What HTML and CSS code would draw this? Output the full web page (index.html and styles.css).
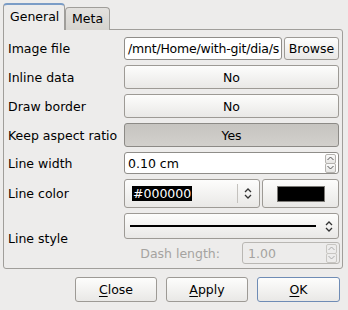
FILE: index.html
```html
<!DOCTYPE html>
<html lang="en">
<head>
    <meta charset="UTF-8">
    <title>Image properties</title>
    <link rel="stylesheet" href="styles.css">
</head>
<body>

<div class="dialog">
    <div class="tabs">
        <div class="tab active">General</div>
        <div class="tab">Meta</div>
    </div>

    <div class="panel">
        <div class="label">Image file</div>
        <div class="field split">
            <div class="entry file">/mnt/Home/with-git/dia/s</div>
            <button class="btn browse">Browse</button>
        </div>

        <div class="label">Inline data</div>
        <div class="field"><button class="btn toggle">No</button></div>

        <div class="label">Draw border</div>
        <div class="field"><button class="btn toggle">No</button></div>

        <div class="label">Keep aspect ratio</div>
        <div class="field"><button class="btn toggle pressed">Yes</button></div>

        <div class="label">Line width</div>
        <div class="field">
            <div class="entry spin">
                <span class="spin-text">0.10 cm</span>
                <span class="stepper">
                    <span class="step"><svg width="7" height="5" viewBox="0 0 7 5"><path d="M0.5 4 L3.5 1 L6.5 4" fill="none" stroke="#555" stroke-width="1"/></svg></span>
                    <span class="step"><svg width="7" height="5" viewBox="0 0 7 5"><path d="M0.5 1 L3.5 4 L6.5 1" fill="none" stroke="#555" stroke-width="1"/></svg></span>
                </span>
            </div>
        </div>

        <div class="label">Line color</div>
        <div class="field split color-row">
            <div class="btn combo color-combo">
                <span class="combo-body"><span class="selected">#000000</span></span>
                <span class="combo-sep"></span>
                <span class="combo-arrow"><svg width="8" height="13" viewBox="0 0 8 13"><path d="M1 5 L4 2 L7 5 M1 8 L4 11 L7 8" fill="none" stroke="#333" stroke-width="1.3"/></svg></span>
            </div>
            <button class="btn swatch-btn"><span class="swatch"></span></button>
        </div>

        <div class="label style-label">Line style</div>
        <div class="field style-field">
            <div class="btn combo style-combo">
                <span class="combo-body"><span class="line-sample"></span></span>
                <span class="combo-sep"></span>
                <span class="combo-arrow"><svg width="8" height="13" viewBox="0 0 8 13"><path d="M1 5 L4 2 L7 5 M1 8 L4 11 L7 8" fill="none" stroke="#333" stroke-width="1.3"/></svg></span>
            </div>
            <div class="dash-row">
                <span class="dash-label">Dash length:</span>
                <div class="entry spin disabled">
                    <span class="spin-text">1.00</span>
                    <span class="stepper">
                        <span class="step"><svg width="7" height="5" viewBox="0 0 7 5"><path d="M0.5 4 L3.5 1 L6.5 4" fill="none" stroke="#aaa" stroke-width="1"/></svg></span>
                        <span class="step"><svg width="7" height="5" viewBox="0 0 7 5"><path d="M0.5 1 L3.5 4 L6.5 1" fill="none" stroke="#aaa" stroke-width="1"/></svg></span>
                    </span>
                </div>
            </div>
        </div>
    </div>

    <div class="actions">
        <button class="btn action"><u>C</u>lose</button>
        <button class="btn action"><u>A</u>pply</button>
        <button class="btn action default"><u>O</u>K</button>
    </div>
</div>

</body>
</html>
```

FILE: styles.css
```css
body {
    margin: 0;
    background-color: #edeceb;
    font-family: "DejaVu Sans", sans-serif;
    font-size: 12.5px;
    color: #000000;
}

.dialog {
    width: 348px;
    height: 310px;
    padding-top: 3px;
    box-sizing: border-box;
}

.tabs {
    display: flex;
    align-items: flex-end;
    margin-left: 3px;
    height: 27px;
    position: relative;
    z-index: 1;
}

.tab {
    box-sizing: border-box;
    border: 1px solid #a09e9a;
    border-bottom: none;
    border-radius: 4px 4px 0 0;
    padding: 0 6px;
    height: 23px;
    line-height: 22px;
    background: linear-gradient(#e3e1de, #d6d4cf);
}

.tab.active {
    height: 27px;
    line-height: 24px;
    padding: 0 0 0 6px;
    background-color: #edeceb;
    background-image: none;
    border-top: 2px solid #7a9cc6;
    width: 62px;
}

.panel {
    margin: -1px 5px 0 3px;
    height: 240px;
    box-sizing: border-box;
    border: 1px solid #a09e9a;
    border-radius: 0 3px 3px 3px;
    padding: 7px 3px 0 4px;
    display: grid;
    grid-template-columns: 116px 1fr;
    grid-template-rows: 23px 24px 24px 24px 22px 29px 51px;
    row-gap: 5px;
}

.label {
    display: flex;
    align-items: center;
    white-space: nowrap;
}

.field {
    display: flex;
    min-width: 0;
}

.split {
    gap: 2px;
}

.entry {
    box-sizing: border-box;
    background-color: #ffffff;
    border: 1px solid #8f8d89;
    border-radius: 3px;
    height: 100%;
    display: flex;
    align-items: center;
    padding: 0 3px;
    white-space: nowrap;
    overflow: hidden;
}

.file {
    flex: 1;
    min-width: 0;
    padding: 0 1px 0 3px;
    letter-spacing: -0.2px;
}

.btn {
    box-sizing: border-box;
    font-family: "DejaVu Sans", sans-serif;
    font-size: 12.5px;
    color: #000000;
    border: 1px solid #9d9a95;
    border-radius: 3px;
    background: linear-gradient(#fdfdfc, #e9e8e6);
    padding: 0;
    margin: 0;
    height: 100%;
}

.browse {
    width: 55px;
    padding: 0 2px;
}

.toggle {
    width: 100%;
}

.pressed {
    background: linear-gradient(#c6c4c0, #d2d0cc);
    border-color: #8c8a86;
}

.spin {
    width: 100%;
    padding: 0 1px 0 3px;
}

.spin-text {
    flex: 1;
}

.stepper {
    display: flex;
    flex-direction: column;
    width: 11px;
    height: 19px;
    margin-right: 1px;
}

.step {
    flex: 1;
    display: flex;
    align-items: center;
    justify-content: center;
    border: 1px solid #b5b3af;
    border-radius: 2px;
    background: linear-gradient(#fafafa, #e6e5e3);
}

.step + .step {
    margin-top: -1px;
}

.color-row {
    height: 29px;
}

.combo {
    display: flex;
    align-items: center;
}

.color-combo {
    width: 136px;
}

.combo-body {
    flex: 1;
    display: flex;
    align-items: center;
    padding-left: 7px;
}

.selected {
    background-color: #000000;
    color: #ffffff;
    line-height: 15px;
    padding: 0 1px;
}

.combo-sep {
    width: 1px;
    height: 19px;
    background-color: #c4c2be;
    margin: 0 6px 0 3px;
}

.combo-arrow {
    display: flex;
    width: 8px;
    margin-right: 7px;
}

.swatch-btn {
    flex: 1;
    display: flex;
    align-items: center;
    justify-content: center;
}

.swatch {
    display: block;
    width: 48px;
    height: 16px;
    background-color: #000000;
    border: 1px solid #7d7b77;
    box-sizing: border-box;
}

.style-label {
    grid-row: 7;
}

.style-field {
    flex-direction: column;
}

.style-combo {
    height: 26px;
    width: 100%;
}

.line-sample {
    display: block;
    width: 186px;
    height: 2px;
    background-color: #000000;
    margin-left: -2px;
}

.dash-row {
    display: flex;
    justify-content: flex-end;
    align-items: center;
    margin-top: 3px;
    height: 22px;
    margin-right: -1px;
}

.dash-label {
    color: #a5a3a0;
    margin-right: 22px;
}

.entry.disabled {
    width: 98px;
    background-color: #edeceb;
    border-color: #b9b7b3;
    color: #a5a3a0;
    padding-left: 5px;
}

.disabled .step {
    background: #edeceb;
    border-color: #c8c6c2;
}

.actions {
    display: flex;
    justify-content: flex-end;
    gap: 9px;
    margin: 8px 8px 0 0;
    height: 25px;
}

.action {
    width: 82px;
}

.action u {
    text-underline-offset: 2px;
}

.default {
    width: 83px;
    border-color: #6f8cb5;
}
```
